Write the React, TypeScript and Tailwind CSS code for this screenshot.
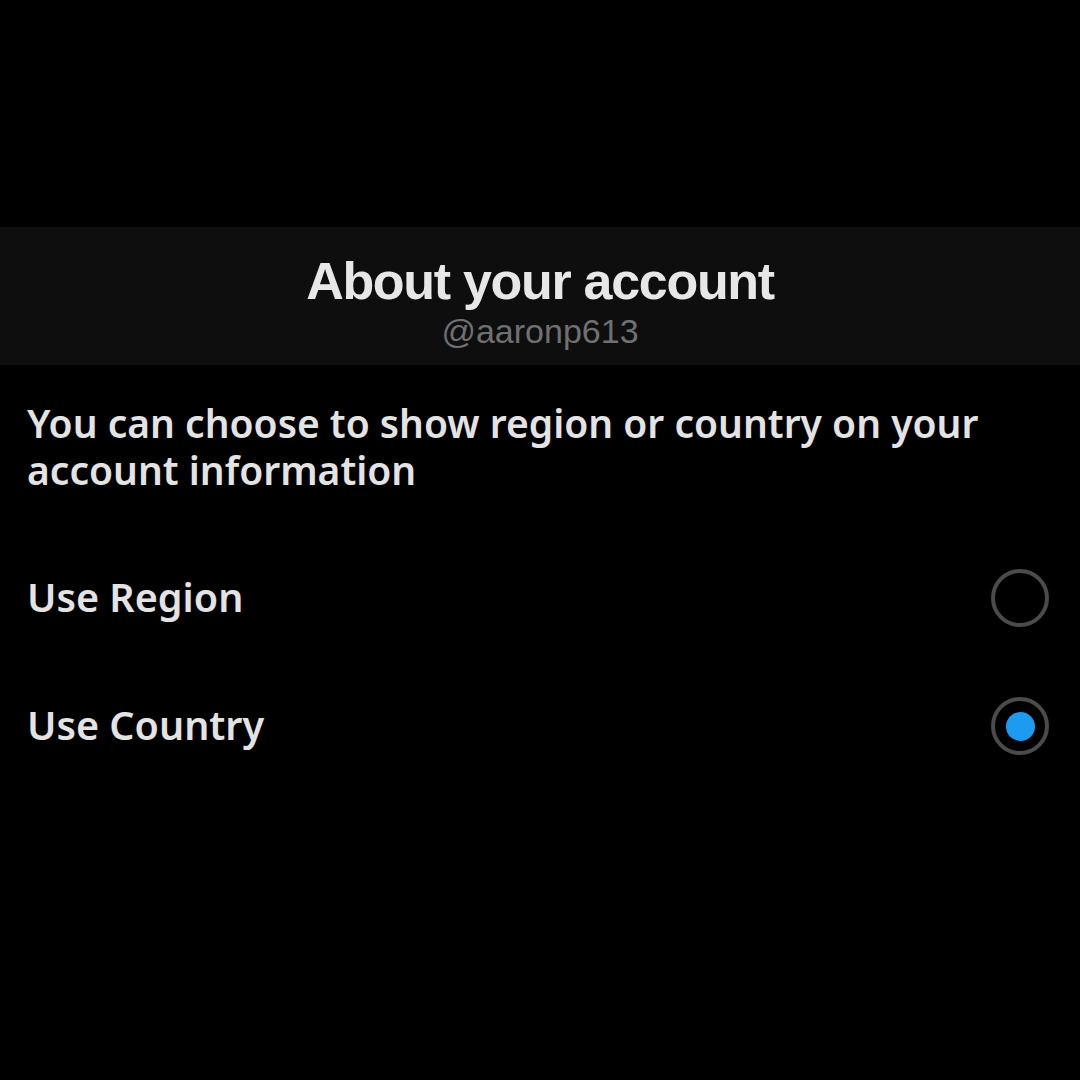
import { useState } from 'react'

const options = [
  { id: 'region', label: 'Use Region' },
  { id: 'country', label: 'Use Country' },
]

function Radio({ checked }: { checked: boolean }) {
  return (
    <span className="flex h-[58px] w-[58px] items-center justify-center rounded-full border-[4px] border-[#4b4b4d]">
      {checked && <span className="h-[29px] w-[29px] rounded-full bg-[#1d9bf0]" />}
    </span>
  )
}

export default function App() {
  const [choice, setChoice] = useState('country')

  return (
    <div className="min-h-[1080px] w-[1080px] bg-black text-[#e7e9ea]">
      <div className="h-[227px]" />

      {/* header */}
      <div className="flex h-[138px] flex-col items-center bg-[#0e0e0e] pt-[24px]">
        <h1 className="text-[52px] font-bold leading-[60px] tracking-[-1.3px] text-[#e7e7e7] [font-family:'Liberation_Sans',Arial,sans-serif]">
          About your account
        </h1>
        <p className="text-[34px] leading-[40px] text-[#6f7071] [font-family:'Liberation_Sans',Arial,sans-serif]">
          @aaronp613
        </p>
      </div>

      <div className="px-[27px] pt-[34px] [font-family:'Noto_Sans',sans-serif]">
        <p className="text-[39px] font-semibold leading-[47px] text-[#e3e3e3]">
          You can choose to show region or country on your account information
        </p>

        <div className="mt-[76px] flex flex-col gap-[70px]">
          {options.map(o => (
            <button
              key={o.id}
              onClick={() => setChoice(o.id)}
              className="flex h-[58px] items-center justify-between pr-[4px] text-left"
            >
              <span className="text-[39.5px] font-semibold text-[#e3e3e3]">{o.label}</span>
              <Radio checked={choice === o.id} />
            </button>
          ))}
        </div>
      </div>
    </div>
  )
}
